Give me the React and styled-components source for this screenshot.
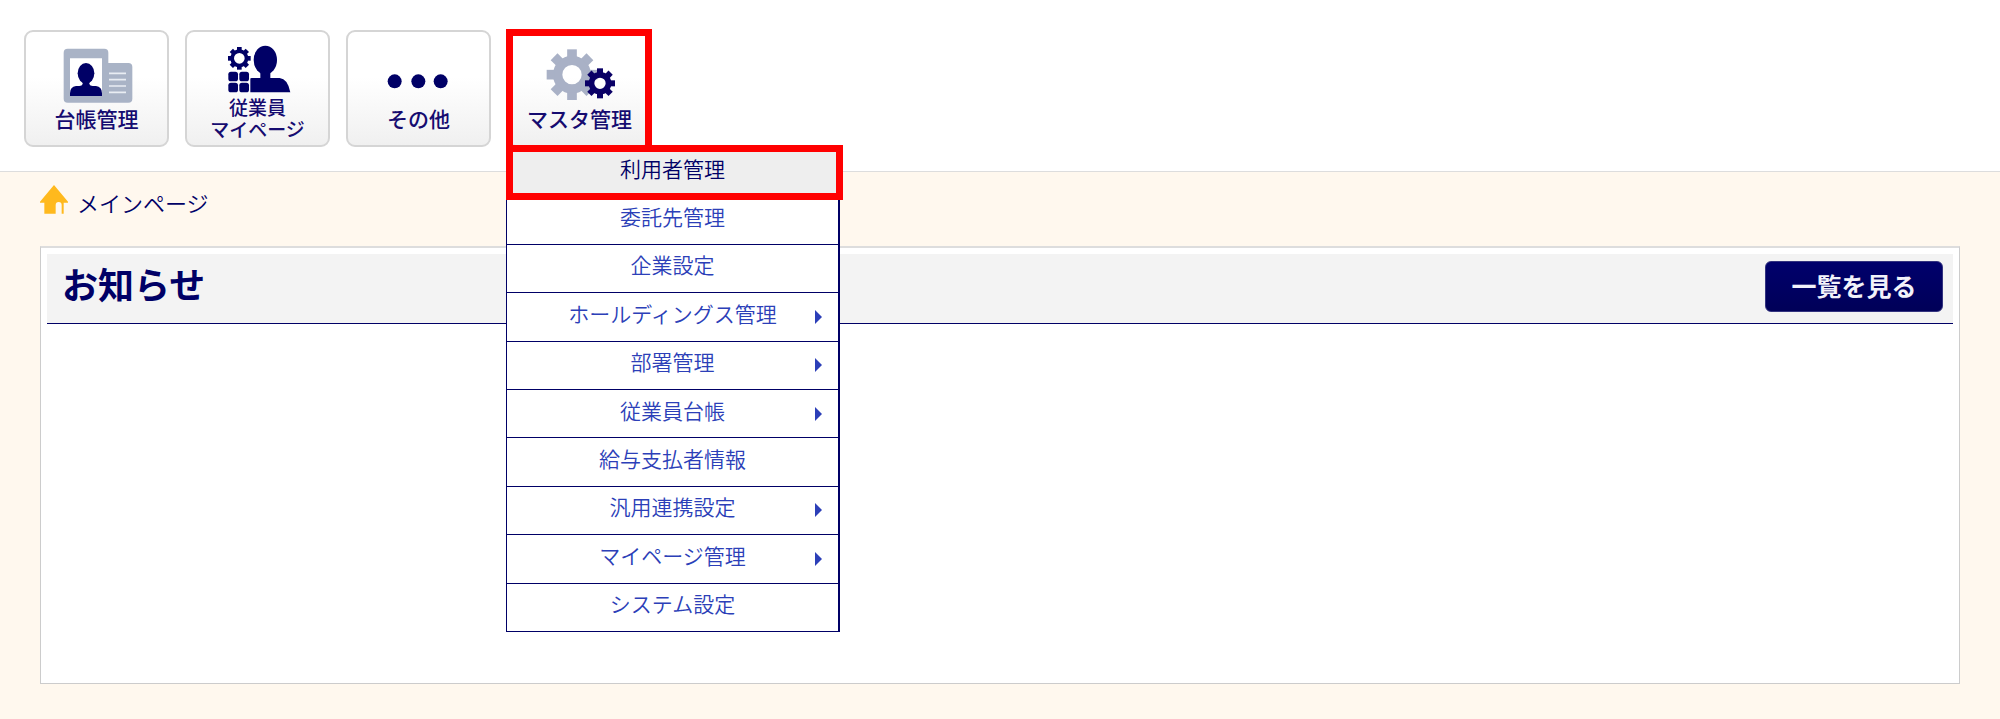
import React, { useState } from 'react';
import styled, { createGlobalStyle, css } from 'styled-components';

const MENU_ITEMS = [
  { id: 0, label: '利用者管理' },
  { id: 1, label: '委託先管理' },
  { id: 2, label: '企業設定' },
  { id: 3, label: 'ホールディングス管理', hasChild: true },
  { id: 4, label: '部署管理', hasChild: true },
  { id: 5, label: '従業員台帳', hasChild: true },
  { id: 6, label: '給与支払者情報' },
  { id: 7, label: '汎用連携設定', hasChild: true },
  { id: 8, label: 'マイページ管理', hasChild: true },
  { id: 9, label: 'システム設定' },
];

const TEETH = [0, 45, 90, 135, 180, 225, 270, 315];

// 歯車 (outer: 歯先の半径, root: 歯元の半径, hole: 穴の半径)
const Gear = ({ cx, cy, outer, root, hole, tooth, color }) => (
  <g transform={`translate(${cx} ${cy})`} fill={color}>
    <circle
      r={(root + hole) / 2}
      fill="none"
      stroke={color}
      strokeWidth={root - hole}
    />
    {TEETH.map((deg) => (
      <rect
        key={deg}
        x={-tooth / 2}
        y={-outer}
        width={tooth}
        height={outer - root + 4}
        transform={`rotate(${deg})`}
      />
    ))}
  </g>
);

const LedgerIcon = () => (
  <NavIcon viewBox="82 84 360 198" aria-hidden="true">
    <path
      fill="#a9b3c6"
      d="M174 101h110q12 0 12 12v31h60q12 0 12 12v95q0 12-12 12H174q-12 0-12-12V113q0-12 12-12z"
    />
    <path fill="#fff" d="M181 130h96v113h-96z" />
    <g fill="#000066">
      <ellipse cx="229" cy="175" rx="25" ry="31" />
      <path d="M219 195h20v12q2 6 10 6h10q18 2 18 22v8h-96v-8q0-20 18-22h10q8 0 10-6z" />
    </g>
    <path
      stroke="#e9edf3"
      strokeWidth="5"
      d="M298 175h51M298 194h51M298 213h51M298 232h51"
    />
  </NavIcon>
);

const EmployeeIcon = () => (
  <NavIcon viewBox="565 49 360 198" aria-hidden="true">
    <Gear cx={689} cy={128} outer={34} root={27} hole={16} tooth={14} color="#000066" />
    <g fill="#000066">
      <rect x="656" y="168" width="29" height="29" rx="8" />
      <rect x="689" y="168" width="29" height="29" rx="8" />
      <rect x="656" y="201" width="29" height="29" rx="8" />
      <rect x="689" y="201" width="29" height="29" rx="8" />
      <ellipse cx="767" cy="133" rx="35" ry="43" />
      <path d="M752 165h30v22h28q24 2 32 43H722v-41q0-2 4-2h26z" />
    </g>
  </NavIcon>
);

const OtherIcon = () => (
  <NavIcon viewBox="88 84 360 198" aria-hidden="true">
    <g fill="#000066">
      <circle cx="195" cy="199" r="21" />
      <circle cx="266" cy="199" r="21" />
      <circle cx="333" cy="199" r="21" />
    </g>
  </NavIcon>
);

const MasterIcon = () => (
  <NavIcon viewBox="569 84 360 198" aria-hidden="true">
    <Gear cx={725} cy={179} outer={76} root={57} hole={29} tooth={29} color="#a9b1c6" />
    <Gear cx={809} cy={205} outer={45} root={34} hole={17} tooth={18} color="#0a0066" />
  </NavIcon>
);

const App = () => {
  const [open, setOpen] = useState(true);

  return (
    <>
      <GlobalStyle />
      <Header>
        <NavList>
          <NavItem>
            <NavButton type="button">
              <LedgerIcon />
              <NavLabel>台帳管理</NavLabel>
            </NavButton>
          </NavItem>
          <NavItem>
            <NavButton type="button" $twoLines>
              <EmployeeIcon />
              <NavLabel>従業員</NavLabel>
              <NavLabel>マイページ</NavLabel>
            </NavButton>
          </NavItem>
          <NavItem>
            <NavButton type="button">
              <OtherIcon />
              <NavLabel>その他</NavLabel>
            </NavButton>
          </NavItem>
          <NavItem $marked>
            <NavButton
              type="button"
              aria-expanded={open}
              onClick={() => setOpen(!open)}
            >
              <MasterIcon />
              <NavLabel>マスタ管理</NavLabel>
            </NavButton>
            {open && (
              <Menu>
                {MENU_ITEMS.map((item) => (
                  <MenuItem key={item.id} $active={item.id === 0}>
                    <MenuLink href="#" $active={item.id === 0}>
                      <MenuLabel>{item.label}</MenuLabel>
                      {item.hasChild && (
                        <Arrow viewBox="0 0 7 14" aria-hidden="true">
                          <path d="M0 0l7 7-7 7z" />
                        </Arrow>
                      )}
                    </MenuLink>
                  </MenuItem>
                ))}
              </Menu>
            )}
          </NavItem>
        </NavList>
      </Header>
      <Main>
        <Breadcrumb>
          <HomeIcon viewBox="0 0 84 87" aria-hidden="true">
            <path d="M42 0l42 50v3H71v33h-6V60q0-9-9-9t-9 9v26H13V53H0v-3z" />
          </HomeIcon>
          メインページ
        </Breadcrumb>
        <Panel>
          <PanelHeader>
            <PanelTitle>お知らせ</PanelTitle>
            <ListButton type="button">一覧を見る</ListButton>
          </PanelHeader>
        </Panel>
      </Main>
    </>
  );
};

const GlobalStyle = createGlobalStyle`
  * {
    box-sizing: border-box;
  }
  body {
    margin: 0;
    background: #fff8ee;
    color: #000066;
    font-family: 'Liberation Sans', 'Noto Sans CJK JP', sans-serif;
    font-size: 21px;
  }
  button {
    font-family: inherit;
    cursor: pointer;
  }
`;

// 赤枠
const redFrame = css`
  content: '';
  position: absolute;
  z-index: 2;
  border: 7px solid #ff0000;
  pointer-events: none;
`;

const Header = styled.header`
  padding: 30px 24px 24px;
  background: #fff;
  border-bottom: 1px solid #ddd;
`;

const NavList = styled.ul`
  display: flex;
  gap: 16px;
  margin: 0;
  padding: 0;
  list-style: none;
`;

const NavItem = styled.li`
  position: relative;
  ${({ $marked }) =>
    $marked &&
    css`
      &::after {
        ${redFrame}
        inset: -1px 0 -5px -1px;
      }
    `}
`;

const NavButton = styled.button`
  display: flex;
  flex-direction: column;
  align-items: center;
  justify-content: flex-start;
  width: 145px;
  height: 117px;
  padding: ${({ $twoLines }) => ($twoLines ? '0' : '11px')} 0 0;
  border: 2px solid #d5d5d5;
  border-radius: 9px;
  background: linear-gradient(#fff 40%, #f0f0f0);
  color: #150b70;
  font-size: ${({ $twoLines }) => ($twoLines ? '19px' : '21px')};
  font-weight: 500;
  line-height: 22px;
`;

const NavIcon = styled.svg`
  flex: none;
  width: 120px;
  height: 66px;
`;

const NavLabel = styled.span`
  display: block;
`;

const Menu = styled.ul`
  position: absolute;
  z-index: 1;
  top: calc(100% + 1px);
  left: -1px;
  display: grid;
  grid-auto-rows: 1fr;
  width: 334px;
  height: 484px;
  margin: 0;
  padding: 0;
  border: solid #000066;
  border-width: 0 2px 0 1px;
  background: #fff;
  list-style: none;
`;

const MenuItem = styled.li`
  position: relative;
  border-bottom: 1px solid #000066;
  ${({ $active }) =>
    $active &&
    css`
      &::after {
        ${redFrame}
        inset: -3px -5px -5px -1px;
      }
    `}
`;

const MenuLink = styled.a`
  display: grid;
  grid-template-columns: 7px 1fr 7px;
  align-items: center;
  height: 100%;
  padding: 0 16px;
  background: ${({ $active }) => ($active ? '#eee' : '#fff')};
  color: ${({ $active }) => ($active ? '#000066' : '#2c3fb8')};
  font-weight: 350;
  line-height: 24px;
  text-decoration: none;
  &:hover {
    background: #eee;
  }
`;

const MenuLabel = styled.span`
  grid-column: 2;
  padding-bottom: 4px;
  text-align: center;
`;

const Arrow = styled.svg`
  width: 7px;
  height: 14px;
  fill: #2c3fb8;
`;

const Main = styled.main`
  padding: 12px 40px 34px;
`;

const Breadcrumb = styled.div`
  display: flex;
  align-items: flex-end;
  gap: 9px;
  height: 30px;
  font-size: 22px;
  font-weight: 350;
  line-height: 18px;
`;

const HomeIcon = styled.svg`
  width: 28px;
  height: 29px;
  fill: #ffb91d;
`;

const Panel = styled.section`
  min-height: 438px;
  margin-top: 32px;
  padding: 6px;
  border: 1px solid #ccc;
  border-top: 2px solid #ddd;
  background: #fff;
`;

const PanelHeader = styled.div`
  display: flex;
  justify-content: space-between;
  align-items: flex-start;
  padding: 7px 10px 11px 15px;
  border-bottom: 1px solid #000066;
  background: #f3f3f3;
`;

const PanelTitle = styled.h1`
  margin: 0;
  font-size: 36px;
  font-weight: 700;
  line-height: 51px;
`;

const ListButton = styled.button`
  width: 178px;
  height: 51px;
  padding: 0;
  border: 1px solid #33337f;
  border-radius: 6px;
  background: linear-gradient(#00006c, #000058);
  color: #f2f2fa;
  font-size: 25px;
  font-weight: 700;
  line-height: 48px;
`;

export default App;
